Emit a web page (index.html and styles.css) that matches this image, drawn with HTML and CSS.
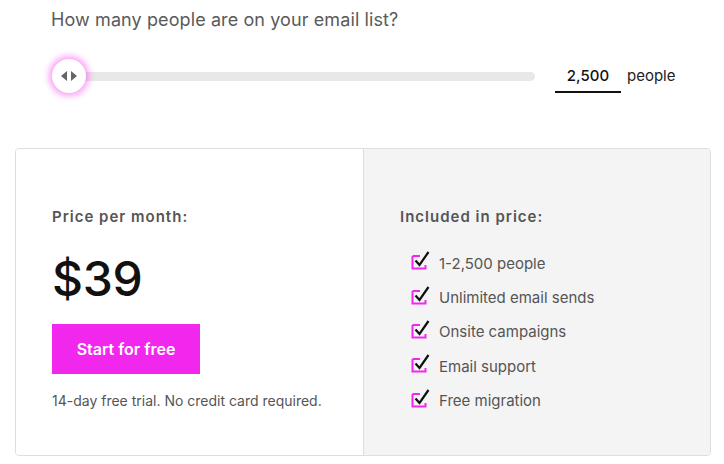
FILE: index.html
```html
<!DOCTYPE html>
<html>
<head>
<meta charset="utf-8">
<link rel="stylesheet" href="styles.css">
</head>
<body>
<div class="page">
  <h2 class="question">How many people are on your email list?</h2>
  <div class="slider-row">
    <div class="slider">
      <div class="thumb">
        <svg width="20" height="12" viewBox="0 0 20 12"><path d="M8 1 L2 6 L8 11 Z M12 1 L18 6 L12 11 Z" fill="#666"/></svg>
      </div>
      <div class="track"></div>
    </div>
    <div class="count">
      <span class="count-value">2,500</span>
      <span class="count-unit">people</span>
    </div>
  </div>
  <div class="card">
    <div class="card-left">
      <div class="label">Price per month:</div>
      <div class="price">$39</div>
      <a class="btn">Start for free</a>
      <p class="note">14-day free trial. No credit card required.</p>
    </div>
    <div class="card-right">
      <div class="label">Included in price:</div>
      <ul class="features">
        <li><svg class="check" width="20" height="20" viewBox="0 0 20 20"><path d="M1.5 5 V17.5 H14.5 V14" fill="none" stroke="#f127ee" stroke-width="2"/><path d="M1.5 5 H9" fill="none" stroke="#f127ee" stroke-width="2"/><path d="M4.5 9.5 L8.5 14 L17.5 1" fill="none" stroke="#111" stroke-width="2.2"/></svg>1-2,500 people</li>
        <li><svg class="check" width="20" height="20" viewBox="0 0 20 20"><path d="M1.5 5 V17.5 H14.5 V14" fill="none" stroke="#f127ee" stroke-width="2"/><path d="M1.5 5 H9" fill="none" stroke="#f127ee" stroke-width="2"/><path d="M4.5 9.5 L8.5 14 L17.5 1" fill="none" stroke="#111" stroke-width="2.2"/></svg>Unlimited email sends</li>
        <li><svg class="check" width="20" height="20" viewBox="0 0 20 20"><path d="M1.5 5 V17.5 H14.5 V14" fill="none" stroke="#f127ee" stroke-width="2"/><path d="M1.5 5 H9" fill="none" stroke="#f127ee" stroke-width="2"/><path d="M4.5 9.5 L8.5 14 L17.5 1" fill="none" stroke="#111" stroke-width="2.2"/></svg>Onsite campaigns</li>
        <li><svg class="check" width="20" height="20" viewBox="0 0 20 20"><path d="M1.5 5 V17.5 H14.5 V14" fill="none" stroke="#f127ee" stroke-width="2"/><path d="M1.5 5 H9" fill="none" stroke="#f127ee" stroke-width="2"/><path d="M4.5 9.5 L8.5 14 L17.5 1" fill="none" stroke="#111" stroke-width="2.2"/></svg>Email support</li>
        <li><svg class="check" width="20" height="20" viewBox="0 0 20 20"><path d="M1.5 5 V17.5 H14.5 V14" fill="none" stroke="#f127ee" stroke-width="2"/><path d="M1.5 5 H9" fill="none" stroke="#f127ee" stroke-width="2"/><path d="M4.5 9.5 L8.5 14 L17.5 1" fill="none" stroke="#111" stroke-width="2.2"/></svg>Free migration</li>
      </ul>
    </div>
  </div>
</div>
</body>
</html>
```

FILE: styles.css
```css
* { box-sizing: border-box; }
html, body { margin: 0; padding: 0; background: #fff; }
body { font-family: Inter, "Open Sans", sans-serif; color: #555; }
.page { width: 724px; padding: 0 13px 0 15px; }
.question {
  margin: 0;
  padding: 8px 0 0 36px;
  font-size: 18px;
  font-weight: 400;
  line-height: 24px;
  color: #5a5a5a;
  letter-spacing: 0.1px;
}
.slider-row {
  display: flex;
  align-items: center;
  margin-top: 27px;
  padding-left: 37px;
  height: 34px;
}
.slider {
  width: 483px;
  display: flex;
  align-items: center;
}
.thumb {
  width: 34px;
  height: 34px;
  border-radius: 50%;
  background: #fff;
  box-shadow: 0 0 6px 3px rgba(241, 39, 238, 0.45);
  display: flex;
  align-items: center;
  justify-content: center;
  flex: none;
  position: relative;
  z-index: 1;
}
.track {
  flex: 1;
  height: 9px;
  background: #e8e8e8;
  border-radius: 5px;
  margin-left: -4px;
}
.count {
  display: flex;
  align-items: center;
  margin-left: 20px;
}
.count-value {
  width: 66px;
  text-align: center;
  font-size: 15px;
  font-weight: 500;
  color: #111;
  border-bottom: 2px solid #111;
  padding: 5px 0 6px;
  line-height: 18px;
  margin-top: 2px;
}
.count-unit {
  margin-left: 6px;
  font-size: 15px;
  color: #222;
  padding-bottom: 2px;
}
.card {
  margin-top: 55px;
  display: flex;
  height: 308px;
  border: 1px solid #dedede;
  border-radius: 4px;
  overflow: hidden;
}
.card-left {
  width: 348px;
  background: #fff;
  border-right: 1px solid #dedede;
  padding: 58px 0 0 36px;
}
.card-right {
  flex: 1;
  background: #f4f4f4;
  padding: 58px 0 0 36px;
}
.label {
  font-size: 15px;
  font-weight: 600;
  letter-spacing: 1px;
  color: #555;
  line-height: 20px;
}
.price {
  margin-top: 22px;
  font-size: 48px;
  font-weight: 500;
  color: #111;
  line-height: 60px;
  letter-spacing: -0.3px;
}
.btn {
  display: flex;
  align-items: center;
  justify-content: center;
  margin-top: 15px;
  width: 148px;
  height: 50px;
  background: #f127ee;
  color: #fff;
  font-size: 16px;
  font-weight: 600;
}
.note {
  margin: 17px 0 0;
  font-size: 14px;
  color: #555;
  line-height: 20px;
}
.features {
  list-style: none;
  margin: 19px 0 0;
  padding: 0 0 0 11px;
}
.features li {
  display: flex;
  align-items: center;
  height: 34.4px;
  font-size: 15px;
  color: #555;
}
.check { margin-right: 8px; margin-top: -4px; flex: none; }
```
